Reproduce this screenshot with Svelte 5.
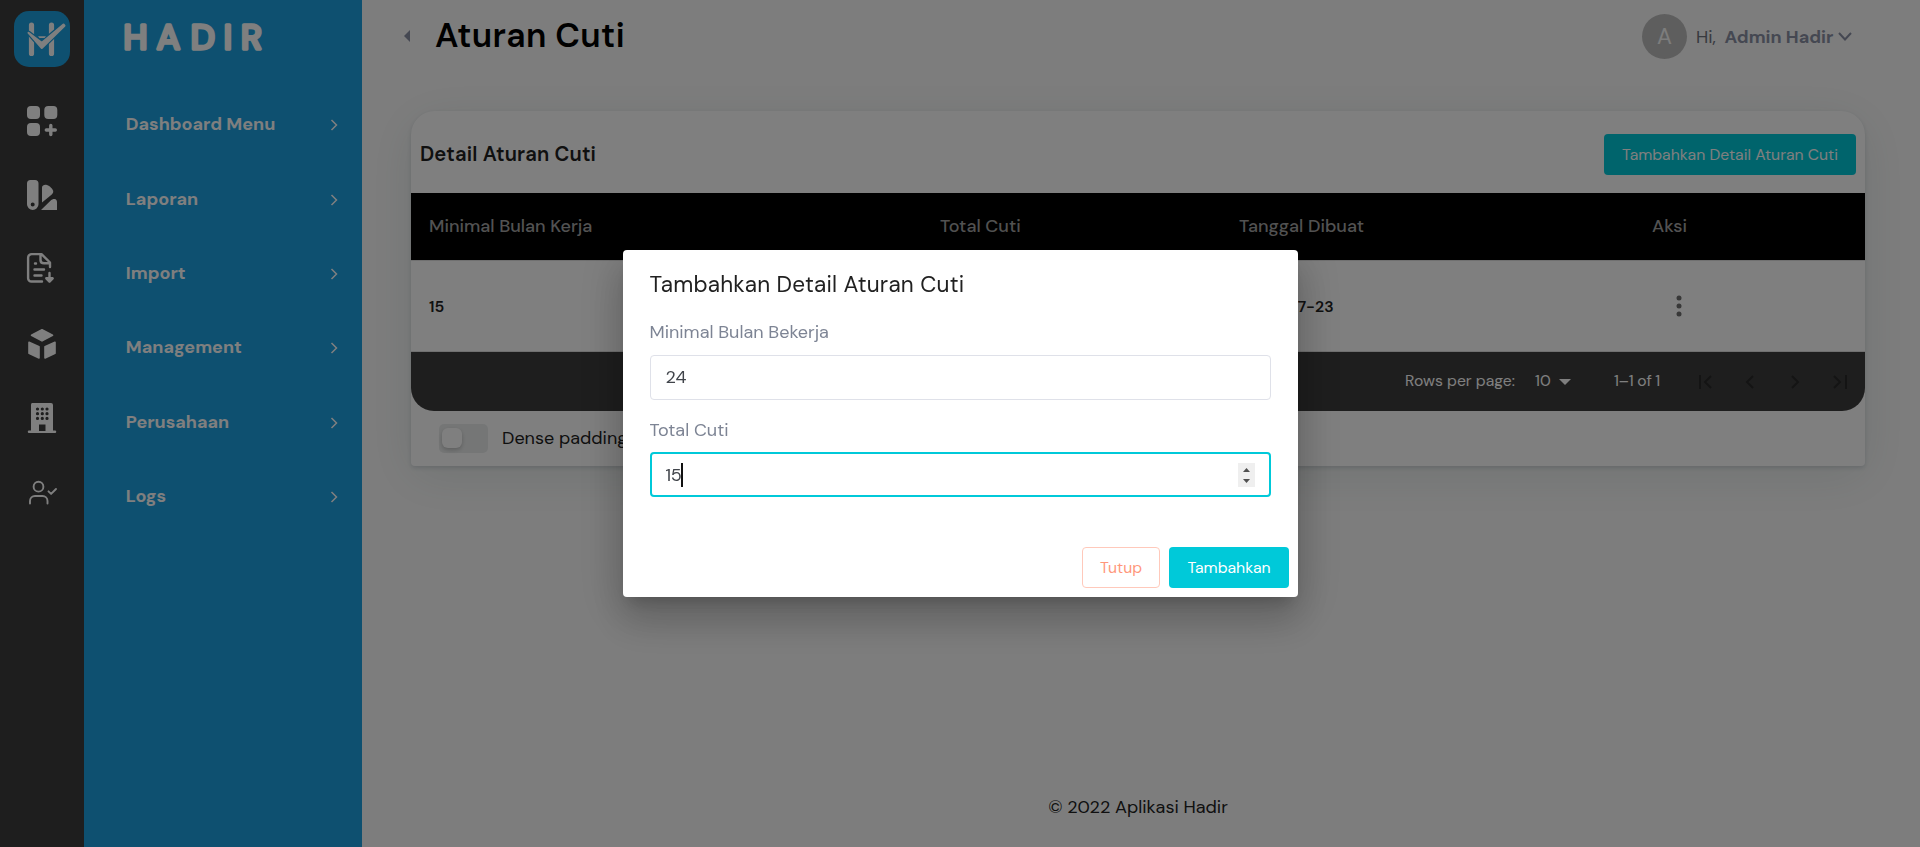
<script>
  const menu = ['Dashboard Menu', 'Laporan', 'Import', 'Management', 'Perusahaan', 'Logs'];
  let minimal = $state('24');
  let total = $state('15');
</script>

<div class="page">
  <aside class="rail">
    <svg class="logo" viewBox="0 0 56 56">
      <rect width="56" height="56" rx="15" fill="#1ca0e0" />
      <path d="M17.5 14v28.5M37.5 14v28.5" stroke="#fff" stroke-width="5.2" stroke-linecap="round" />
      <path d="M14.5 21.8 27.8 31.8 49.5 13.5 50.5 14.7 27.8 37Z" fill="#fff" stroke="#1ca0e0" stroke-width="4.400" stroke-linejoin="round" />
      <path d="M24 25.300h8l-1.500 1.600h-5Z" fill="#fff" />
      <path d="M14.5 21.8 27.8 31.8 49.5 13.5 50.5 14.7 27.8 37Z" fill="#fff" stroke="#fff" stroke-width="2" stroke-linejoin="round" />
    </svg>
    <nav class="icons">
      <svg viewBox="0 0 30 30" fill="#fff">
        <rect width="13" height="13" rx="4" /><rect x="17.3" width="13" height="13" rx="4" /><rect y="17" width="13" height="13" rx="4" />
        <path d="M23.8 19.5v9M19.3 24h9" stroke="#fff" stroke-width="3.4" stroke-linecap="round" />
      </svg>
      <svg viewBox="0 0 30 30" fill="#fff">
        <path fill-rule="evenodd" d="M3.5 0h4.5a3.5 3.5 0 0 1 3.5 3.5V24.2a5.75 5.75 0 0 1-11.5 0V3.5A3.5 3.5 0 0 1 3.5 0ZM5.7 22.6a2 2 0 1 0 0 4 2 2 0 0 0 0-4Z" />
        <path d="M15 22.5V7.5C15 5.5 17 4.6 19 4.8c2.600.3 6 3.200 7 5.700.7 1.800-.2 3-1.500 4.200Z" />
        <path d="M14 30 24 20.300c1-1 2.500-1.700 4-1.200 1.500.5 2 1.700 2 3.200V30Z" />
      </svg>
      <svg class="doc" viewBox="0 0 30 30" fill="none" stroke="#fff" stroke-width="2.4" stroke-linecap="round" stroke-linejoin="round">
        <path d="M15 28.500H4.500A3.300 3.300 0 0 1 1.100 25.200V4.800A3.700 3.700 0 0 1 4.800 1.100H14.500L23 9.500V14M13.500 1.500V7C13.500 9 15 10.300 17 10.300H22.500" />
        <path d="M8 10.500h1M7.500 16.500h9.500M7.500 22.500h7M22.500 20v8" />
        <path d="m19.300 25.300 3.200 3.300 3.200-3.300Z" fill="#fff" />
      </svg>
      <svg viewBox="0 0 30 30" fill="#fff" stroke="#fff" stroke-width="1.600" stroke-linejoin="round">
        <path d="m15 .8 10.500 5.500L15 11.900 4.500 6.300Z" />
        <path d="M2 13.200 12 17.800v11.100L2 24.300ZM28 13.200 18 17.800v11.100l10-4.600Z" />
      </svg>
      <svg class="building" viewBox="0 0 30 30">
        <path fill="#fff" d="M5 0h19a2 2 0 0 1 2 2v25.500h2a1.200 1.200 0 0 1 0 2.500H2a1.200 1.200 0 0 1 0-2.500h2V2a2 2 0 0 1 1-2Z" />
        <path stroke="#3c3c3c" stroke-width="3.200" stroke-linecap="round" d="M10.500 6h.01M15.300 6h.01M20 6h.01M10.500 10.700h.01M15.300 10.700h.01M20 10.700h.01M10.500 15.400h.01M15.300 15.400h.01M20 15.400h.01" />
        <path fill="#3c3c3c" d="M12 21.500h6.500V28H12Z" />
      </svg>
      <svg viewBox="0 0 30 30" fill="none" stroke="#fff" stroke-width="1.900" stroke-linecap="round" stroke-linejoin="round">
        <circle cx="11.500" cy="8.700" r="4.900" />
        <path d="M3 25.500V23a5 5 0 0 1 5-5h7.500a5 5 0 0 1 5 5v2.500M21.500 13.300l2.600 2.600 4.900-4.900" />
      </svg>
    </nav>
  </aside>

  <aside class="sidebar">
    <svg class="wordmark" viewBox="0 0 150 48"><text y="41" x="1.600 34.800 68.700 101.800 118.900">HADIR</text></svg>
    <nav>
      {#each menu as item}
        <a href="#menu"><span>{item}</span>
          <svg viewBox="0 0 8 12"><path d="m1.500 1 5 5-5 5" fill="none" stroke="#fff" stroke-width="1.500" /></svg>
        </a>
      {/each}
    </nav>
  </aside>

  <main>
    <header>
      <svg class="back" viewBox="0 0 6 12"><path d="M6 0v12L0 6Z" fill="#8a90a5" /></svg>
      <h1>Aturan Cuti</h1>
      <div class="user">
        <span class="avatar">A</span><span class="hi">Hi,</span><b>Admin Hadir</b>
        <svg viewBox="0 0 14 9"><path d="m1 1 6 6.500L13 1" fill="none" stroke="#8a90a5" stroke-width="2" /></svg>
      </div>
    </header>

    <section class="card">
      <div class="toolbar"><h2>Detail Aturan Cuti</h2><button class="primary add">Tambahkan Detail Aturan Cuti</button></div>
      <div class="row head"><span>Minimal Bulan Kerja</span><span>Total Cuti</span><span>Tanggal Dibuat</span><span>Aksi</span></div>
      <div class="row body"><span>15</span><span>12</span><span>2022-07-23</span>
        <span class="more"><svg viewBox="0 0 6 22" fill="#707070"><circle cx="3" cy="3" r="2.500" /><circle cx="3" cy="11" r="2.500" /><circle cx="3" cy="19" r="2.500" /></svg></span>
      </div>
      <div class="pager">
        <span class="rows">Rows per page:</span>
        <span class="count">10</span>
        <svg class="tri" viewBox="0 0 12 6"><path d="M0 0h12L6 6Z" fill="#fff" /></svg>
        <span class="range">1–1 of 1</span>
        <svg class="steps" viewBox="0 0 149 14" fill="none" stroke="#292929" stroke-width="2">
          <path d="M2 0v14M13 1 7 7l6 6M55 1 49 7l6 6M94 1l6 6-6 6M136 1l6 6-6 6M148 0v14" />
        </svg>
      </div>
      <div class="dense"><span class="switch"><i></i></span><span>Dense padding</span></div>
    </section>
    <footer>© 2022 Aplikasi Hadir</footer>
  </main>
</div>

<div class="overlay">
  <div class="dialog">
    <h3>Tambahkan Detail Aturan Cuti</h3>
    <label for="minimal">Minimal Bulan Bekerja</label>
    <div class="field"><input id="minimal" bind:value={minimal} /></div>
    <label for="total" class="second">Total Cuti</label>
    <div class="field focus">
      <span class="value">{total}</span><i class="caret"></i>
      <svg class="spin" viewBox="0 0 17 24"><path fill="#efefef" d="M0 0h17v24H0Z" /><path fill="#505050" d="M5 9h7L8.500 5ZM5 16h7l-3.500 4Z" /></svg>
    </div>
    <div class="actions"><button class="close">Tutup</button><button class="primary submit">Tambahkan</button></div>
  </div>
</div>

<style>
  :global(body) { font-family: "DM Sans", Inter, sans-serif; font-optical-sizing: none; overflow: hidden; }
  *, *::before { box-sizing: border-box; }
  h1, h2, h3 { margin: 0; }
  svg { display: block; flex: none; }
  span, b, h1, h2, h3, label, button, footer { white-space: nowrap; }
  button, input { font-family: inherit; }
  .page { display: flex; height: 847px; background: #fbfbfb; }
  .rail { width: 84px; background: #3c3c3c; padding: 11px 14px 0; }
  .logo { width: 56px; height: 56px; }
  .icons { display: flex; flex-direction: column; gap: 44.400px; padding: 39px 0 0 13px; }
  .icons svg { width: 30px; height: 30px; overflow: visible; }
  .icons .doc { margin: -2px 0 2px; }
  .icons .building { margin: -1px 0 1px; }
  .sidebar { width: 278px; background: #1ca0e0; padding: 8px 0 0 38px; }
  .wordmark { width: 150px; height: 48px; overflow: visible; }
  .wordmark text { font: 450 35px "DM Sans", Inter, sans-serif; fill: #fff; stroke: #fff; stroke-width: 3.500px; stroke-linejoin: round; }
  .sidebar nav { padding: 31.200px 24px 0 3.800px; }
  .sidebar a { display: flex; align-items: center; justify-content: space-between; height: 74.300px; color: #fff; font-size: 18px; font-weight: 700; text-decoration: none; }
  .sidebar a svg { width: 8px; height: 12px; position: relative; top: 1px; }
  main { flex: 1; padding: 0 55px 0 49px; display: flex; flex-direction: column; }
  header { height: 111px; display: flex; align-items: flex-start; margin-left: -7px; padding-top: 14px; }
  .back { width: 6px; height: 12px; margin: 16px 25px 0 0; }
  h1 { font-size: 33.750px; line-height: 43px; font-weight: 600; letter-spacing: .350px; color: #000; }
  .user { margin-left: auto; margin-right: 13px; height: 45px; display: flex; align-items: center; color: #7e8299; font-size: 18px; }
  .avatar { width: 45px; height: 45px; border-radius: 50%; background: #bdbdbd; color: #fafafa; display: grid; place-items: center; font-size: 22.500px; margin-right: 9px; }
  .hi { width: 29px; }
  .user .hi { color: #70747e; }
  .user b { width: 113px; color: #8a90a5; margin-left: -0.500px; margin-right: 0.500px; }
  .user > svg { width: 14px; height: 9px; }
  .card { width: 1454px; height: 355px; background: #fff; border-radius: 24px 24px 4px 4px; box-shadow: 0 2px 4px rgba(40, 60, 80, .16), 0 10px 50px rgba(20, 70, 60, .1); }
  .toolbar { height: 82px; display: flex; justify-content: space-between; align-items: center; padding: 5px 9px 0; }
  h2 { font-size: 20.250px; font-weight: 600; letter-spacing: .160px; color: #212121; padding-bottom: 1px; }
  button { border: 0; border-radius: 4px; height: 41px; padding: 0; text-align: center; font-size: 15.750px; }
  .primary { background: #00c9d9; color: #fff; }
  .add { width: 252px; }
  .row { display: grid; grid-template-columns: 511px 299px 413px 1fr; align-items: center; padding-left: 18px; }
  .head { height: 67px; padding-bottom: 2px; background: #000; color: #a5a5a5; font-size: 18px; font-weight: 500; }
  .body { height: 92px; color: #212121; font-size: 15.750px; font-weight: 600; border: solid #e0e0e0; border-width: 1px 0; }
  .body span:nth-child(3) { letter-spacing: .150px; }
  .more { padding-left: 24px; }
  .more svg { width: 6px; height: 22px; }
  .pager { height: 59px; padding-bottom: 2px; background: #3c3c3c; color: #fff; border-radius: 0 0 23px 23px; display: flex; align-items: center; padding-left: 994px; font-size: 15.750px; }
  .rows { width: 130px; }
  .count { width: 24px; }
  .tri { width: 12px; height: 6px; margin: 3px 43px 0 0; }
  .range { width: 84px; letter-spacing: -.300px; }
  .steps { width: 149px; height: 14px; position: relative; top: 1px; }
  .dense { height: 55px; display: flex; align-items: center; padding-left: 28px; gap: 14px; color: #212121; font-size: 18px; }
  .dense > span + span { padding-bottom: 1px; }
  .switch { width: 49px; height: 29px; border-radius: 5px; background: #ebeded; padding: 4px 3px; }
  .switch i { display: block; width: 20px; height: 20px; border-radius: 6px; background: #fff; box-shadow: 0 2px 4px rgba(0, 0, 0, .2); }
  footer { margin-top: auto; height: 80px; line-height: 80px; text-align: center; color: #212121; font-size: 18px; }
  .overlay { position: fixed; inset: 0; background: rgba(0, 0, 0, .5); display: grid; place-items: center; }
  .dialog { width: 675px; height: 347px; background: #fff; border-radius: 4px; padding: 17px 27px 0; display: flex; flex-direction: column; box-shadow: 0 11px 15px -7px rgba(0, 0, 0, .2), 0 24px 38px 3px rgba(0, 0, 0, .14), 0 9px 46px 8px rgba(0, 0, 0, .12); }
  h3 { font-size: 22.500px; line-height: 36px; font-weight: 400; letter-spacing: .220px; color: #212121; }
  label { font-size: 18px; line-height: 24px; color: #7d8494; margin: 17px 0 11px; }
  label.second { margin: 18px 0 10px; }
  .field { height: 45px; flex: none; border: 1px solid #dfe1e9; border-radius: 4px; display: flex; align-items: center; padding: 0 15px; font-size: 18px; color: #40444a; }
  .field.focus { border: 2px solid #00c9d9; padding: 0 14px; }
  input { border: 0; outline: 0; padding: 0 0 2px; width: 100%; font-size: inherit; color: inherit; background: none; }
  .value { width: 15px; letter-spacing: -.400px; }
  .caret { width: 2px; height: 24px; background: #111; }
  .spin { width: 17px; height: 24px; margin-left: auto; }
  .actions { display: flex; justify-content: flex-end; gap: 9px; margin: 50px -18px 0 0; }
  .close { width: 78px; border: 1px solid #ffc9bb; background: #fff; color: #ff977b; padding-left: 1px; }
  .submit { width: 120px; padding-left: 1px; }
</style>
